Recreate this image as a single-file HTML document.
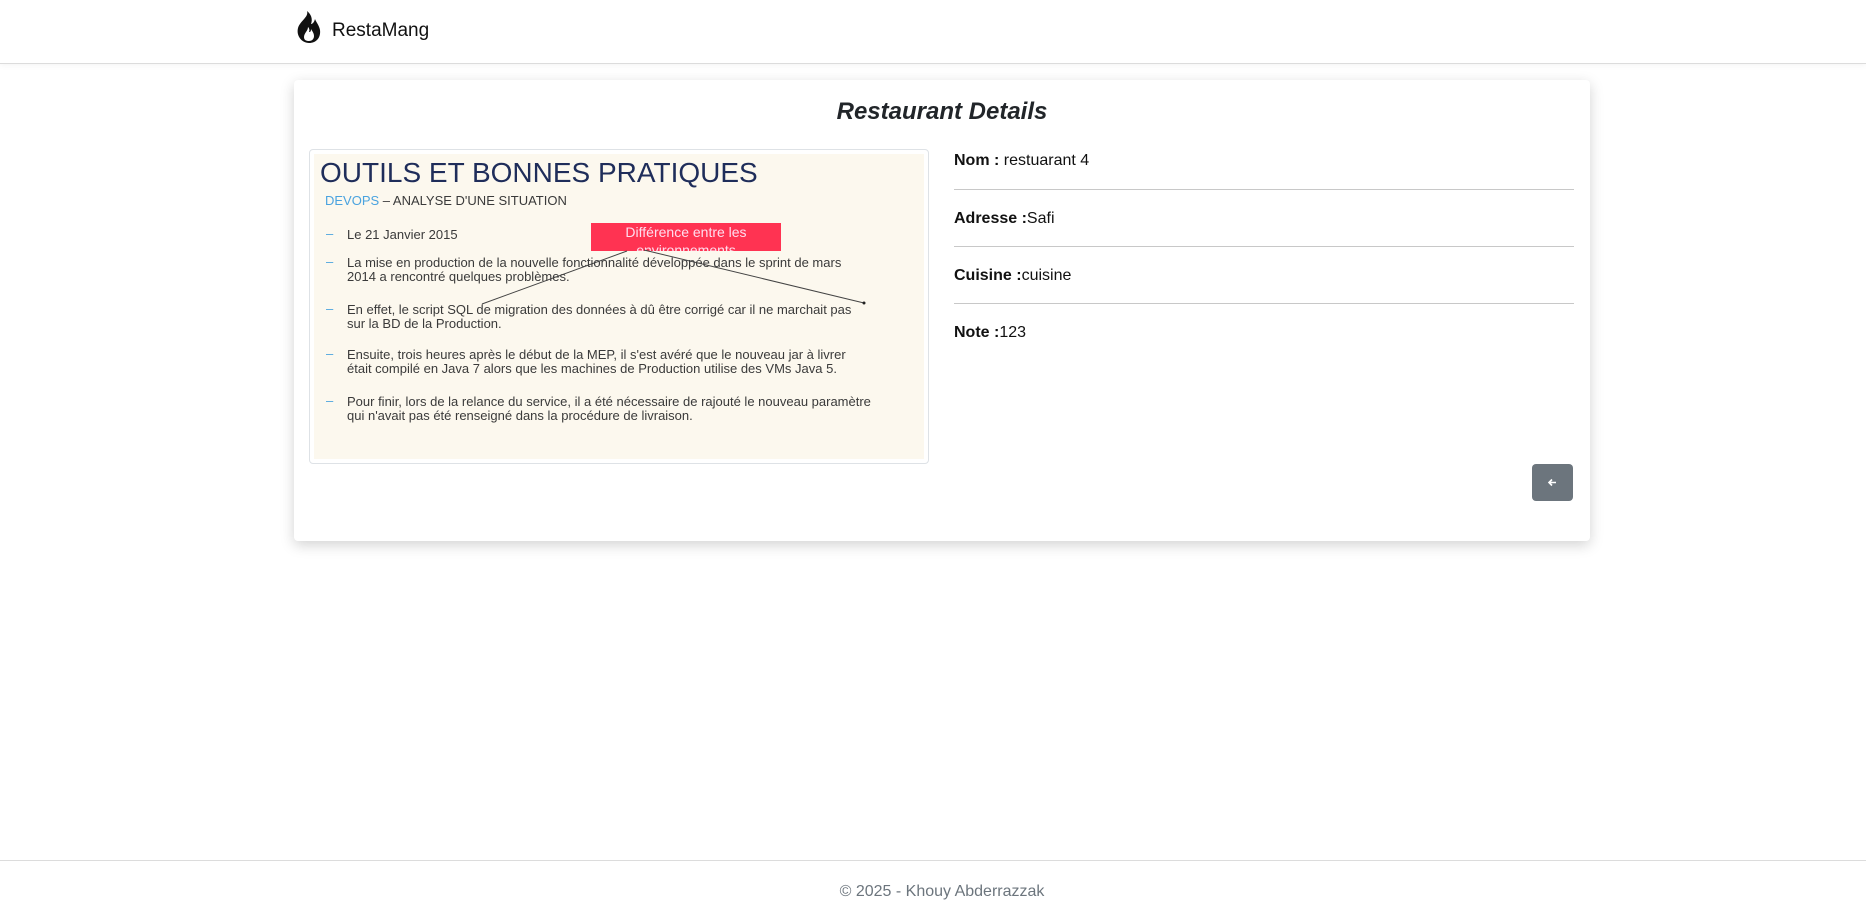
<!DOCTYPE html>
<html><head><meta charset="utf-8"><style>
*{box-sizing:border-box;margin:0;padding:0}
body{width:1866px;height:919px;background:#fff;font-family:"Liberation Sans",sans-serif;position:relative;overflow:hidden;color:#212529}
.nav{position:absolute;left:0;top:0;width:1866px;height:64px;border-bottom:1px solid #dcdcdc;box-shadow:0 1px 6px rgba(0,0,0,.05)}
.brand{position:absolute;left:332px;top:20px;font-size:19px;color:#111}
.card{position:absolute;left:294px;top:80px;width:1296px;height:461px;background:#fff;box-shadow:0 4px 14px rgba(0,0,0,.18);border-radius:4px}
.title{position:absolute;left:0;width:100%;top:98px;text-align:center;font-size:24px;font-weight:bold;font-style:italic;color:#212529;padding-left:18px}
.thumb{position:absolute;left:309px;top:149px;width:620px;height:315px;border:1px solid #dee2e6;border-radius:4px;padding:4px;background:#fff}
.slide{position:absolute;left:4px;top:4px;right:4px;bottom:4px;background:#fcf8ee;overflow:hidden}
.s{position:absolute;white-space:nowrap;color:#3a3a3a;font-size:13px;line-height:13.5px}
.d{position:absolute;color:#4aa3df;font-size:13px}
.row{position:absolute;left:954px;width:620px;font-size:16px;color:#111}
.row b{font-weight:bold}
.hr{position:absolute;left:954px;width:620px;height:1px;background:#c8c8c8}
.btn{position:absolute;left:1532px;top:464px;width:41px;height:37px;background:#6c757d;border-radius:4px}
.foot{position:absolute;left:0;top:860px;width:1866px;height:59px;border-top:1px solid #dcdcdc;text-align:center;color:#6c757d;font-size:16px;padding-top:22px;padding-left:18px}
</style></head><body>
<div class="nav">
<svg style="position:absolute;left:296px;top:11px" width="26" height="33" viewBox="0 0 26 33"><path d="M11 0C13 6 4 10 2 17C0 25 6 32 13 32C20 32 25 27 24 19C23 14 20 11 19 8C18 12 16 13 15 13C17 8 15 3 11 0Z" fill="#111"/><path d="M12 16C12 20 8 22 8 26C8 29 10 30 13 30C16 30 18 28 18 25C18 22 16 20 15 18C15 21 14 21 13 21C14 19 13 17 12 16Z" fill="#fff"/></svg>
<div class="brand">RestaMang</div>
</div>
<div class="card"></div>
<div class="title">Restaurant Details</div>
<div class="thumb"><div class="slide">
<div class="s" style="left:6px;top:2px;font-size:28px;line-height:34px;color:#1f2d5a">OUTILS ET BONNES PRATIQUES</div>
<div class="s" style="left:11px;top:40px;font-size:13px;color:#3a3a3a"><span style="color:#4aa3df">DEVOPS</span> – ANALYSE D'UNE SITUATION</div>
<div class="d" style="left:12px;top:72px">–</div><div class="s" style="left:33px;top:74px">Le 21 Janvier 2015</div>
<div class="d" style="left:12px;top:100px">–</div><div class="s" style="left:33px;top:102px">La mise en production de la nouvelle fonctionnalité développée dans le sprint de mars<br>2014 a rencontré quelques problèmes.</div>
<div class="d" style="left:12px;top:147px">–</div><div class="s" style="left:33px;top:149px">En effet, le script SQL de migration des données à dû être corrigé car il ne marchait pas<br>sur la BD de la Production.</div>
<div class="d" style="left:12px;top:192px">–</div><div class="s" style="left:33px;top:194px">Ensuite, trois heures après le début de la MEP, il s'est avéré que le nouveau jar à livrer<br>était compilé en Java 7 alors que les machines de Production utilise des VMs Java 5.</div>
<div class="d" style="left:12px;top:239px">–</div><div class="s" style="left:33px;top:241px">Pour finir, lors de la relance du service, il a été nécessaire de rajouté le nouveau paramètre<br>qui n'avait pas été renseigné dans la procédure de livraison.</div>
<div style="position:absolute;left:277px;top:69px;width:190px;height:28px;background:#ff3352;color:#fde;font-size:14px;text-align:center;line-height:18px;overflow:hidden;padding-top:0">Différence entre les<br>environnements</div>
<svg style="position:absolute;left:0;top:0" width="612" height="307"><path d="M313 97L168 150M330 96L550 149" stroke="#444" stroke-width="1" fill="none"/><circle cx="550" cy="149" r="1.5" fill="#222"/></svg>
</div></div>
<div class="row" style="top:152px"><b>Nom : </b>restuarant 4</div>
<div class="hr" style="top:189px"></div>
<div class="row" style="top:210px"><b>Adresse :</b>Safi</div>
<div class="hr" style="top:246px"></div>
<div class="row" style="top:267px"><b>Cuisine :</b>cuisine</div>
<div class="hr" style="top:303px"></div>
<div class="row" style="top:324px"><b>Note :</b>123</div>
<div class="btn"><svg style="position:absolute;left:15px;top:13px" width="11" height="11" viewBox="0 0 11 11"><path d="M9 5.5H2.5M5 2.5L2 5.5L5 8.5" stroke="#fff" stroke-width="1.6" fill="none"/></svg></div>
<div class="foot">© 2025 - Khouy Abderrazzak</div>
</body></html>
